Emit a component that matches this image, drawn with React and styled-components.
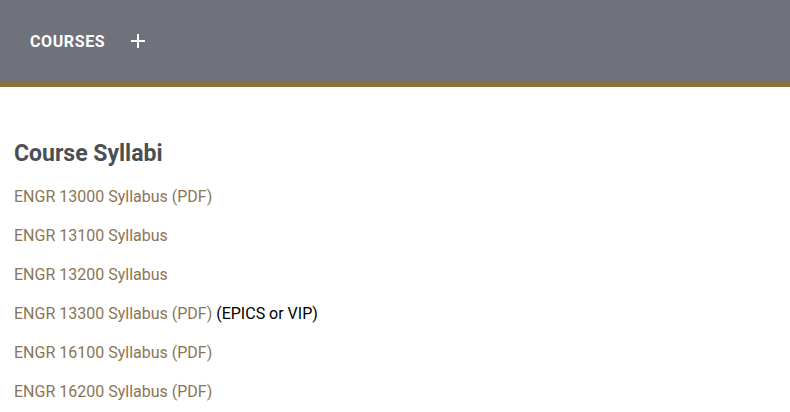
import React from 'react'
import styled, { createGlobalStyle } from 'styled-components'

const Global = createGlobalStyle`
  body {
    margin: 0;
    background: #fff;
    font-family: Roboto, "Liberation Sans", sans-serif;
  }
`

const Header = styled.header`
  height: 82px;
  background: #6f727b;
  border-bottom: 5px solid #8e6f3e;
  display: flex;
  align-items: center;
  padding: 0 30px;
  gap: 26px;
`

const Title = styled.span`
  color: #fff;
  font-family: Roboto, sans-serif;
  font-weight: 700;
  font-size: 16px;
  letter-spacing: 0.6px;
  text-transform: uppercase;
`

const Plus = styled.svg`
  width: 14px;
  height: 14px;
  display: block;
`

const Main = styled.main`
  padding: 53px 14px 0;
`

const Heading = styled.h2`
  margin: 0 0 21px;
  font-family: Roboto, sans-serif;
  font-size: 23px;
  font-weight: 700;
  color: #4b4f54;
`

const List = styled.div`
  display: flex;
  flex-direction: column;
  gap: 21px;
`

const Row = styled.div`
  font-size: 16px;
  line-height: 18px;
  color: #000;
`

const Link = styled.a`
  color: #8b7555;
  text-decoration: none;
`

const items = [
  ['ENGR 13000 Syllabus (PDF)'],
  ['ENGR 13100 Syllabus'],
  ['ENGR 13200 Syllabus'],
  ['ENGR 13300 Syllabus (PDF)', ' (EPICS or VIP)'],
  ['ENGR 16100 Syllabus (PDF)'],
  ['ENGR 16200 Syllabus (PDF)'],
]

export default function App() {
  return (
    <>
      <Global />
      <Header>
        <Title>Courses</Title>
        <Plus viewBox="0 0 14 14">
          <path d="M7 0v14M0 7h14" stroke="#fff" strokeWidth="2" />
        </Plus>
      </Header>
      <Main>
        <Heading>Course Syllabi</Heading>
        <List>
          {items.map(([label, note]) => (
            <Row key={label}>
              <Link href="#">{label}</Link>
              {note}
            </Row>
          ))}
        </List>
      </Main>
    </>
  )
}
